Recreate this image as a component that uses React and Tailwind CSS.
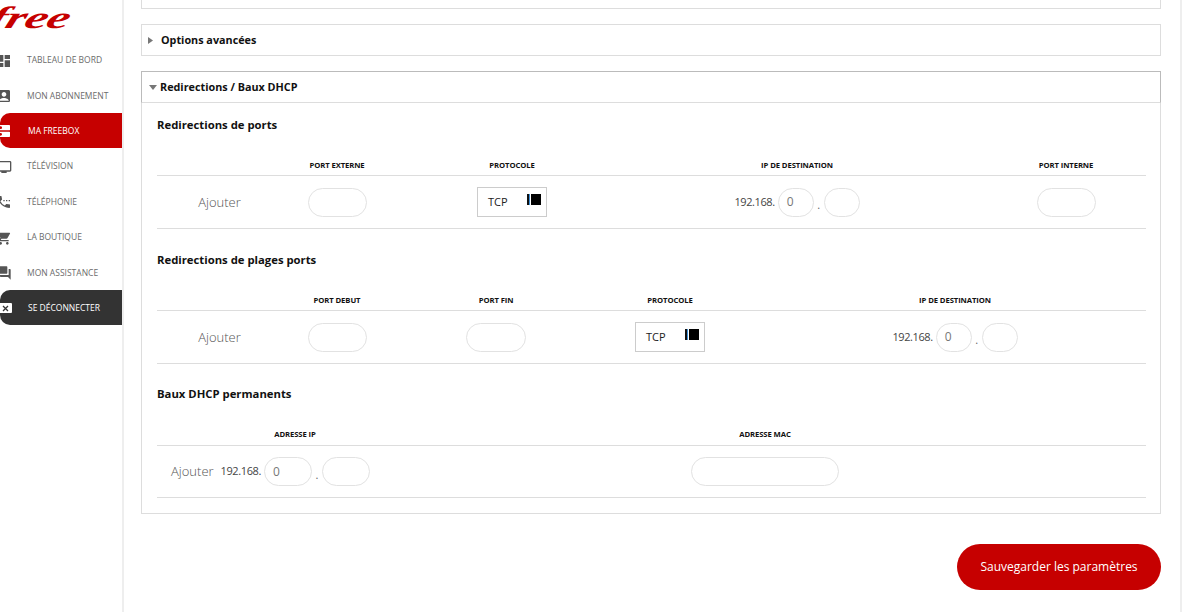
import React from "react";
import { MdDashboard, MdAccountBox, MdDns, MdTv, MdSettingsPhone, MdShoppingCart, MdQuestionAnswer } from "react-icons/md";

const NAV = [
  { label: "TABLEAU DE BORD", Icon: MdDashboard, h: "h-[36px]" },
  { label: "MON ABONNEMENT", Icon: MdAccountBox, h: "h-[35px]" },
  { label: "MA FREEBOX", Icon: MdDns, h: "h-[35px]", active: "bg-[#c60000] text-white" },
  { label: "TÉLÉVISION", Icon: MdTv, h: "h-[36px]" },
  { label: "TÉLÉPHONIE", Icon: MdSettingsPhone, h: "h-[35px]" },
  { label: "LA BOUTIQUE", Icon: MdShoppingCart, h: "h-[36px]" },
  { label: "MON ASSISTANCE", Icon: MdQuestionAnswer, h: "h-[35px]" },
  { label: "SE DÉCONNECTER", Close: true, h: "h-[35px]", active: "bg-[#333333] text-white" },
];

function NavItem({ label, Icon, Close, active, h }) {
  return (
    <div className={`flex ${h} items-center rounded-l-[10px] pt-[1px] ${active || "text-[#6b6b6b]"}`}>
      <div className={`flex shrink-0 ${active ? "w-[28px]" : "w-[27px] text-[#555555]"}`}>
        {Close ? (
          <span className="ml-[-1px] flex h-[10px] w-[13px] items-center justify-center rounded-[1px] bg-white">
            <svg width="7" height="7" viewBox="0 0 7 7"><path d="M1 1 L6 6 M6 1 L1 6" stroke="#333333" strokeWidth="1.3" /></svg>
          </span>
        ) : (
          <Icon className="ml-[-4px] h-[16px] w-[16px]" />
        )}
      </div>
      <span className="text-[8.5px] whitespace-nowrap">{label}</span>
    </div>
  );
}

function Pill({ w = "w-[59px]", value }) {
  return (
    <div className={`flex h-[29px] ${w} shrink-0 items-center rounded-[15px] border border-[#e2e2e2] bg-white pl-[8px] text-[12px] text-[#777777]`}>
      {value}
    </div>
  );
}

function Select() {
  return (
    <div className="flex h-[30px] w-[70px] items-center justify-between border border-[#cccccc] bg-white pr-[5px] pl-[10px] text-[11px] text-[#222222]">
      <span>TCP</span>
      <svg width="14" height="11" viewBox="0 0 14 11" className="mb-[5px]">
        <rect x="0" y="0" width="2" height="11" fill="#111111" />
        <rect x="2" y="0" width="1" height="11" fill="#3b8fd8" />
        <rect x="4" y="0" width="10" height="11" fill="#000000" />
      </svg>
    </div>
  );
}

function Ip({ w = "w-[36px]" }) {
  return (
    <div className="flex items-center gap-[3px]">
      <span className="text-[11px] tracking-[-0.4px] text-[#444444]">192.168.</span>
      <Pill w={w} value="0" />
      <span className="mx-[0.5px] mt-[5px] text-[11px] leading-none text-[#666666]">.</span>
      <Pill w={w} />
    </div>
  );
}

function Ajouter({ cls = "pl-[24px] justify-center" }) {
  return <div className={`flex pt-[1px] text-[13px] font-light text-[#555555] ${cls}`}>Ajouter</div>;
}

function Table({ cols, heads, cells, headCls, rowH }) {
  return (
    <div className={headCls}>
      <div className={`grid ${cols} h-full items-center border-b border-[#dddddd]`}>
        {heads.map((h, i) => (
          <div key={i} className="text-center text-[7.7px] font-bold tracking-[-0.1px] text-[#111111]">{h}</div>
        ))}
      </div>
      <div className={`grid ${cols} ${rowH} items-center border-b border-[#dddddd]`}>
        {cells.map((c, i) => (
          <div key={i} className="flex justify-center">{c}</div>
        ))}
      </div>
    </div>
  );
}

function Title({ children, cls }) {
  return <h3 className={`h-[20px] text-[11.3px] leading-[20px] font-bold text-[#111111] ${cls}`}>{children}</h3>;
}

function Arrow({ down }) {
  return down ? (
    <svg width="8" height="5" viewBox="0 0 8 5" className="mr-[3px] ml-[7px]"><polygon points="0,0 8,0 4,5" fill="#777777" /></svg>
  ) : (
    <svg width="5" height="7" viewBox="0 0 5 7" className="mr-[8px] ml-[6px]"><polygon points="0,0 5,3.5 0,7" fill="#777777" /></svg>
  );
}

export default function App() {
  return (
    <div className="flex h-[612px] w-[1196px] overflow-hidden bg-white font-['Open_Sans',sans-serif]">
      <aside className="w-[124px] shrink-0 border-r-2 border-[#eeeeee]">
        <div className="h-[42px] overflow-hidden">
          <span className="ml-[-3px] block origin-top-left skew-x-[-12deg] scale-x-[1.65] font-['Liberation_Serif',serif] text-[31px] leading-[36px] font-bold tracking-[-0.5px] text-[#c60000] italic">free</span>
        </div>
        <nav className="flex flex-col">
          {NAV.map((n) => <NavItem key={n.label} {...n} />)}
        </nav>
      </aside>
      <main className="mt-[-23px] w-[1058px] shrink-0 border-r-2 border-[#eeeeee] pr-[19px] pl-[17px]">
        <div className="flex h-[32px] items-center border border-[#dddddd] pl-[19px] text-[10.8px] font-bold text-[#111111]">Configuration</div>
        <div className="mt-[15px] flex h-[32px] items-center border border-[#dddddd] pt-[1px] text-[10.8px] font-bold text-[#111111]">
          <Arrow /> Options avancées
        </div>
        <div className="mt-[15px] border-x border-b border-[#dddddd] pb-[15px]">
          <div className="mx-[-1px] flex h-[32px] items-center border border-[#bbbbbb] border-b-[#dddddd] pt-[1px] text-[10.8px] font-bold text-[#111111]">
            <Arrow down /> Redirections / Baux DHCP
          </div>
          <div className="pt-[12px] pr-[14px] pl-[15px]">
            <Title>Redirections de ports</Title>
            <Table
              headCls="mt-[21px] [&>div:first-child]:h-[20px]"
              rowH="h-[53px]"
              cols="grid-cols-[101px_158px_192px_378px_160px]"
              heads={["", "PORT EXTERNE", "PROTOCOLE", "IP DE DESTINATION", "PORT INTERNE"]}
              cells={[<Ajouter />, <Pill />, <Select />, <Ip />, <Pill />]}
            />
            <Title cls="mt-[21px]">Redirections de plages ports</Title>
            <Table
              headCls="mt-[21px] [&>div:first-child]:h-[20px]"
              rowH="h-[53px]"
              cols="grid-cols-[101px_158px_160px_188px_382px]"
              heads={["", "PORT DEBUT", "PORT FIN", "PROTOCOLE", "IP DE DESTINATION"]}
              cells={[<Ajouter />, <Pill />, <Pill w="w-[60px]" />, <Select />, <Ip />]}
            />
            <Title cls="mt-[20px]">Baux DHCP permanents</Title>
            <Table
              headCls="mt-[20px] [&>div:first-child]:h-[22px]"
              rowH="h-[52px]"
              cols="grid-cols-[276px_664px_49px]"
              heads={["ADRESSE IP", "ADRESSE MAC", ""]}
              cells={[
                <div className="flex w-full items-center gap-[7px] pl-[14px]"><Ajouter cls="" /><Ip w="w-[48px]" /></div>,
                <Pill w="w-[148px]" />,
                null,
              ]}
            />
          </div>
        </div>
        <div className="mt-[30px] flex justify-end">
          <button className="h-[46px] w-[204px] rounded-[23px] bg-[#c60000] text-[12px] text-white">Sauvegarder les paramètres</button>
        </div>
      </main>
    </div>
  );
}
